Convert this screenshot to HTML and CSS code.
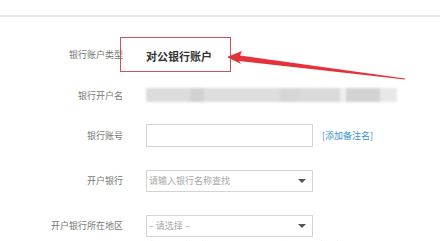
FILE: index.html
```html
<!DOCTYPE html>
<html lang="zh-CN">
<head>
  <meta charset="UTF-8">
  <meta name="viewport" content="width=device-width, initial-scale=1.0">
  <title>银行账户</title>
  <link rel="stylesheet" href="styles.css">
</head>
<body>
  <div class="topbar"></div>

  <div class="form">
    <div class="row row-type">
      <label class="label">银行账户类型</label>
      <div class="field">
        <span class="value-box">对公银行账户</span>
      </div>
    </div>

    <div class="row row-name">
      <label class="label">银行开户名</label>
      <div class="field">
        <div class="blurred"></div>
      </div>
    </div>

    <div class="row row-input">
      <label class="label">银行账号</label>
      <div class="field">
        <input class="text-input" type="text">
        <a class="remark-link" href="#">[添加备注名]</a>
      </div>
    </div>

    <div class="row row-input">
      <label class="label">开户银行</label>
      <div class="field">
        <div class="select">
          <span class="placeholder">请输入银行名称查找</span>
          <span class="caret"></span>
        </div>
      </div>
    </div>

    <div class="row row-input">
      <label class="label">开户银行所在地区</label>
      <div class="field">
        <div class="select">
          <span class="placeholder">– 请选择 –</span>
          <span class="caret"></span>
        </div>
      </div>
    </div>

    <p class="hint">请选择开户银行所在地区，以便准确查找开户银行网点</p>
  </div>

  <!-- annotation arrow drawn over the form -->
  <svg class="arrow" width="440" height="241" viewBox="0 0 440 241">
    <polygon points="227,57 242,51 240,55.5 405,78.5 405,79.5 239,61 241,64" fill="#e5323a"/>
  </svg>
</body>
</html>
```

FILE: styles.css
```css
body {
  margin: 0;
  font-family: "Noto Sans CJK SC", "Liberation Sans", sans-serif;
  background-color: #fff;
  color: #666;
}
.topbar {
  height: 15px;
  border-bottom: 2px solid #e6e6e6;
}
.form {
  padding-top: 21px;
}
.row {
  display: flex;
  align-items: center;
}
.label {
  width: 123px;
  text-align: right;
  font-size: 9px;
  color: #777;
  flex-shrink: 0;
}
.field {
  margin-left: 23px;
  display: flex;
  align-items: center;
}
.row-type {
  height: 33px;
}
.value-box {
  display: flex;
  align-items: center;
  height: 31px;
  margin-left: -26px;
  padding: 2px 18px 0 25px;
  border: 1px solid #c7545b;
  font-size: 11px;
  font-weight: bold;
  color: #333;
}
.row-name {
  margin-top: 17px;
  height: 14px;
}
.blurred {
  width: 251px;
  height: 14px;
  background: linear-gradient(to right,
    #dcdcdc 0, #dcdcdc 44px, #d2d2d2 44px, #d2d2d2 58px,
    #dedede 58px, #dedede 134px, #d6d6d6 134px, #d6d6d6 154px,
    #dadada 154px, #dadada 194px, #efefef 194px, #efefef 200px,
    #d3d3d3 200px, #d3d3d3 234px, #e8e8e8 234px, #e8e8e8 251px);
  filter: blur(0.8px);
}
.row-input {
  margin-top: 22px;
  height: 23px;
}
.text-input {
  box-sizing: border-box;
  width: 167px;
  height: 23px;
  margin: 0;
  border: 1px solid #d4d4d4;
  background: #fff;
}
.remark-link {
  margin-left: 9px;
  font-size: 9px;
  color: #3d8fd1;
  text-decoration: none;
}
.select {
  box-sizing: border-box;
  width: 167px;
  height: 22px;
  padding: 0 4px 0 2px;
  border: 1px solid #d4d4d4;
  display: flex;
  align-items: center;
  justify-content: space-between;
}
.placeholder {
  font-size: 9px;
  color: #a8a8a8;
}
.caret {
  width: 0;
  height: 0;
  margin-right: 2px;
  border-left: 4px solid transparent;
  border-right: 4px solid transparent;
  border-top: 4px solid #555;
}
.hint {
  margin: 2px 0 0 146px;
  font-size: 9px;
  color: #bbb;
  filter: blur(0.6px);
}
.arrow {
  position: absolute;
  left: 0;
  top: 0;
  pointer-events: none;
}
```
